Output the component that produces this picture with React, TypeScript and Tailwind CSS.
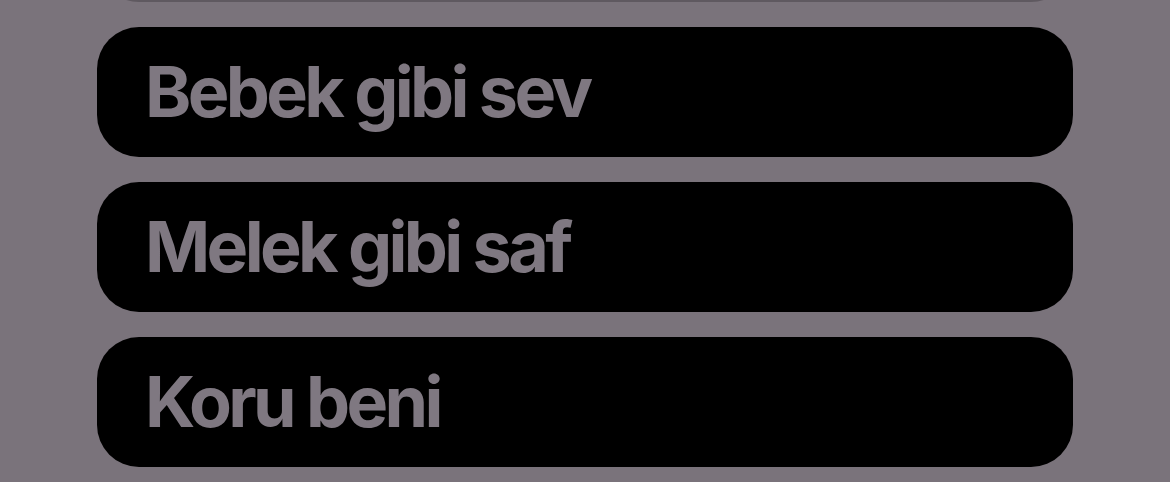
import React from "react";

const items = ["Bebek gibi sev", "Melek gibi saf", "Koru beni"];

const App: React.FC = () => {
  return (
    <div className="w-[1170px] h-[482px] overflow-hidden bg-[#7a737b]" style={{ fontFamily: "Inter, 'Noto Sans', sans-serif" }}>
      <div className="flex flex-col gap-[25px] px-[97px] -mt-[128px]">
        <div className="h-[130px] rounded-[42px] bg-[#5f5960]" />
        {items.map((t) => (
          <div key={t} className="h-[130px] rounded-[42px] bg-black flex items-center pl-[48px]">
            <span className="text-[70px] font-bold tracking-[-0.052em] text-[#7f7881] leading-none">{t}</span>
          </div>
        ))}
      </div>
    </div>
  );
};

export default App;
